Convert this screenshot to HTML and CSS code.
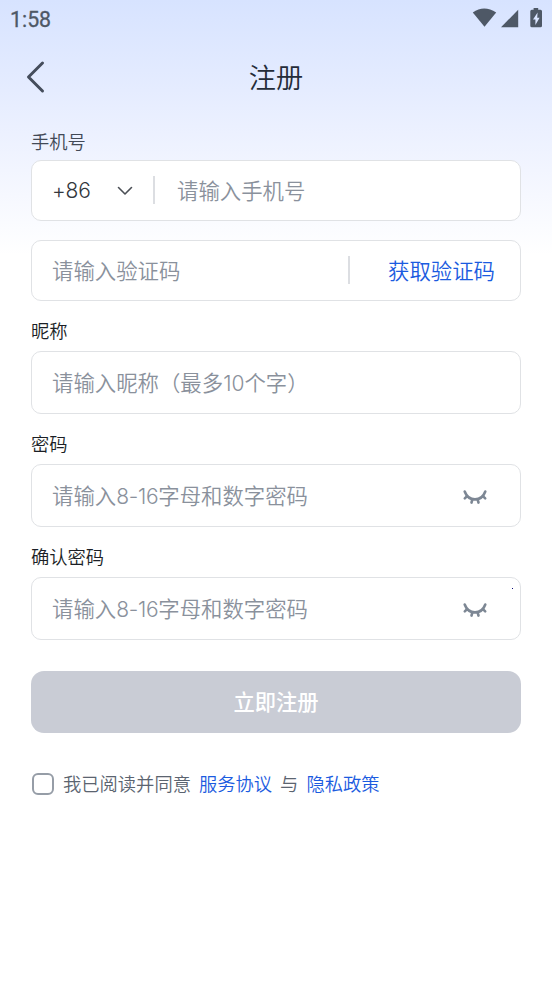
FILE: index.html
```html
<!DOCTYPE html>
<html lang="zh-CN">
<head>
<meta charset="utf-8">
<title>注册</title>
<link rel="stylesheet" href="styles.css">
</head>
<body>
<div class="status">
  <span class="time">1:58</span>
  <svg class="status-icons" width="72" height="28" viewBox="0 0 72 28" fill="#4e5866">
    <path d="M.8 12.4Q12 4.8 24.2 12.4L12.5 26.7Z"/>
    <path d="M46.2 9.7V27.3H29Z"/>
    <path fill-rule="evenodd" d="M61.6 8H66.2V9.8H68.5Q70 9.8 70 11.3V25.8Q70 27.3 68.5 27.3H59.8Q58.3 27.3 58.3 25.8V11.3Q58.3 9.8 59.8 9.8H61.6ZM65.6 12.5L61 19.5H63.4V25L67.6 17.7H65.2Z"/>
  </svg>
</div>
<header class="nav">
  <svg class="back" width="20" height="34" viewBox="0 0 20 34" fill="none" stroke="#454d5c" stroke-width="3" stroke-linecap="round" stroke-linejoin="round"><path d="M17.5 3L3.5 17L17.5 31"/></svg>
  <h1>注册</h1>
</header>
<main class="form">
  <div class="label soft">手机号</div>
  <div class="field short phone">
    <span class="code">+86</span>
    <svg class="chevron" width="16" height="10" viewBox="0 0 16 10" fill="none" stroke="#4b4f55" stroke-width="1.6" stroke-linecap="round" stroke-linejoin="round"><path d="M1.5 1.5L8 8L14.5 1.5"/></svg>
    <i class="divider"></i>
    <span class="hint">请输入手机号</span>
  </div>
  <div class="field short verify">
    <span class="hint">请输入验证码</span>
    <i class="divider"></i>
    <span class="get">获取验证码</span>
  </div>
  <div class="label">昵称</div>
  <div class="field"><span class="hint">请输入昵称（最多<b class="ten">10</b>个字）</span></div>
  <div class="label">密码</div>
  <div class="field">
    <span class="hint">请输入<b>8-16</b>字母和数字密码</span>
    <svg class="eye" width="26" height="16" viewBox="0 0 26 16" fill="none" stroke="#7d8794" stroke-width="2.6" stroke-linecap="round"><path d="M2.7 2.5C6.5 13 19.5 13 23.3 2.5M5.3 6.9L2.8 9.4M10.4 10.1L9.5 13.6M15.6 10.1L16.5 13.6M20.7 6.9L23.2 9.4"/></svg>
  </div>
  <div class="label">确认密码</div>
  <div class="field">
    <span class="hint">请输入<b>8-16</b>字母和数字密码</span>
    <svg class="eye" width="26" height="16" viewBox="0 0 26 16" fill="none" stroke="#7d8794" stroke-width="2.6" stroke-linecap="round"><path d="M2.7 2.5C6.5 13 19.5 13 23.3 2.5M5.3 6.9L2.8 9.4M10.4 10.1L9.5 13.6M15.6 10.1L16.5 13.6M20.7 6.9L23.2 9.4"/></svg>
    <i class="speck"></i>
  </div>
  <div class="submit">立即注册</div>
  <div class="agree">
    <i class="check"></i>
    <span>我已阅读并同意</span>
    <a>服务协议</a>
    <span>与</span>
    <a>隐私政策</a>
  </div>
</main>
</body>
</html>
```
FILE: styles.css
```css
* { box-sizing: border-box; }
body {
  margin: 0;
  height: 983px;
  overflow: hidden;
  background: #fff linear-gradient(180deg, #d7e3ff 0, #e5ecff 90px, #f2f5ff 170px, #fff 255px) no-repeat;
  font-family: "Noto Sans CJK SC DemiLight", "Noto Sans CJK SC", sans-serif;
  font-weight: 350;
}
svg { display: block; flex: none; }
.status {
  height: 38px;
  padding: 0 8px 0 10px;
  display: flex;
  justify-content: space-between;
}
.time {
  font: 400 21.3px/39px Roboto, sans-serif;
  color: #4e5866;
  -webkit-text-stroke: .3px #4e5866;
}
.nav {
  height: 78px;
  padding-left: 25px;
  display: grid;
  grid-template-columns: 20px 1fr 45px;
  align-items: center;
}
h1 {
  margin: 0;
  padding-bottom: 2px;
  font-size: 27.2px;
  line-height: 38px;
  font-weight: 350;
  color: #242c39;
  text-align: center;
}
.form { padding: 12px 31px 0; }
.label {
  height: 34px;
  font-size: 18.3px;
  line-height: 26px;
  color: #1b1f26;
}
.soft { height: 32px; color: #424956; }
.field {
  position: relative;
  height: 63px;
  margin-bottom: 16px;
  padding: 0 32px 0 20px;
  display: flex;
  align-items: center;
  border: 1.5px solid #e0e2e5;
  border-radius: 10px;
  background: #fff;
  font-size: 21.4px;
  line-height: 32px;
  white-space: nowrap;
}
.short { height: 61px; margin-bottom: 19px; }
.hint, .get { padding-bottom: 2px; }
.hint { color: #8a919c; }
.hint b, .code { font-family: Inter, sans-serif; font-weight: 300; font-size: 21px; line-height: 20px; }
.hint b { letter-spacing: -.3px; }
.hint .ten { letter-spacing: 0; }
.code { width: 65px; letter-spacing: -.2px; color: #33373d; }
.divider { width: 2px; height: 28px; margin-bottom: 2px; background: #dcdee2; }
.phone .divider { margin: 0 22px 2px 20px; }
.verify { padding-right: 25px; margin-bottom: 16px; }
.verify .divider { margin-left: auto; margin-right: 38px; }
.get { color: #1b5be0; }
.eye { margin-left: auto; margin-top: 2px; }
.speck {
  position: absolute;
  top: 10px;
  right: 7px;
  width: 1px;
  height: 1px;
  background: #0a0a78;
}
.submit {
  height: 62px;
  margin-top: 31px;
  border-radius: 13px;
  background: #c9ccd5;
  color: #fff;
  font-family: "Noto Sans CJK SC", sans-serif;
  font-size: 21.3px;
  line-height: 60px;
  font-weight: 500;
  text-align: center;
}
.agree {
  margin-top: 37px;
  height: 28px;
  display: flex;
  align-items: center;
  font-size: 18.3px;
  line-height: 26px;
  color: #5b6470;
}
.agree span, .agree a { padding-bottom: 2px; }
.check {
  width: 22px;
  height: 22px;
  margin: 0 9px 0 1px;
  border: 2px solid #969da7;
  border-radius: 6px;
  background: #fff;
}
.agree a { color: #1b5be0; margin: 0 8px; }
```
